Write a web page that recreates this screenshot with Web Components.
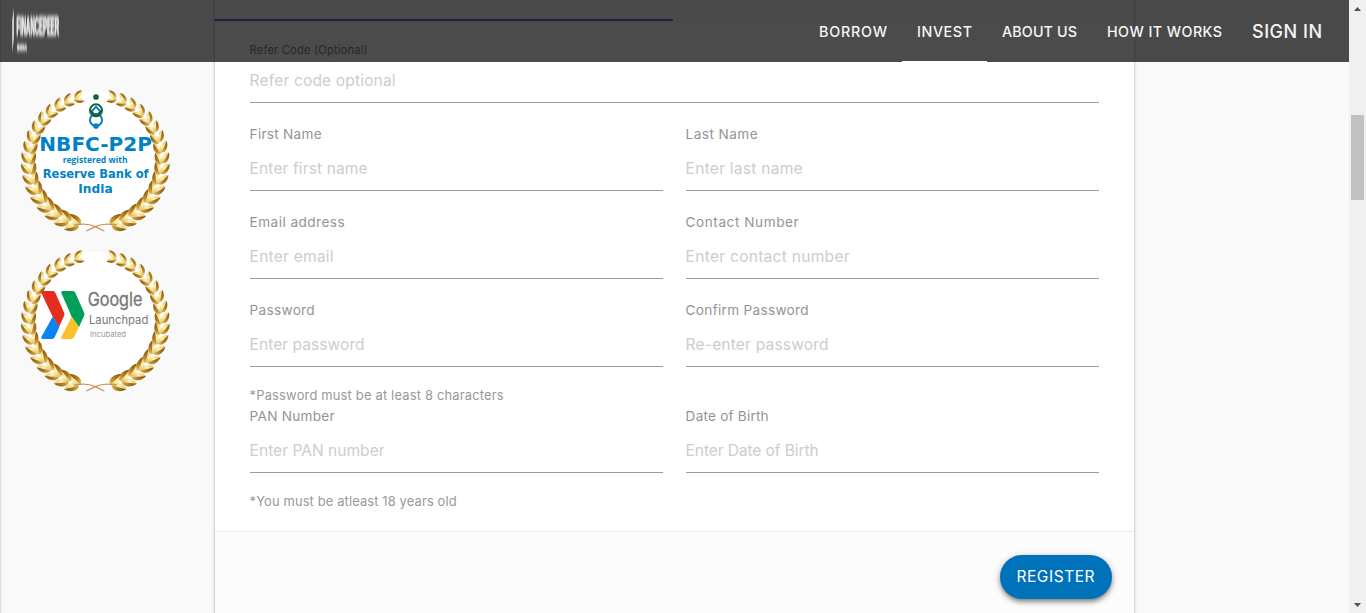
<!DOCTYPE html>
<html lang="en">
<head>
<meta charset="utf-8">
<title>Financepeer</title>
<style>
html,body{margin:0;height:100%;overflow:hidden;background:#f9f9f9;font-family:Inter,"Open Sans",sans-serif}
</style>
</head>
<body>
<fp-app></fp-app>
<script>
const define = (name, html, setup) => customElements.define(name, class extends HTMLElement {
  connectedCallback() {
    if (this.shadowRoot) return;
    const t = document.createElement('template');
    t.innerHTML = html;
    this.attachShadow({mode: 'open'}).append(t.content.cloneNode(true));
    if (setup) setup(this, this.shadowRoot);
  }
});

// Text that is tracked to fill a given width.
define('fp-text', `<style>:host{display:inline-block;white-space:nowrap;width:max-content}span{display:inline-block}</style><span><slot></slot></span>`,
  (el, root) => {
    const span = root.querySelector('span'), w = +el.getAttribute('w');
    const n = el.textContent.length;
    const natural = span.getBoundingClientRect().width;
    if (!w || !natural) return;
    span.style.letterSpacing = ((w - natural) / (n - 1)) + 'px';
    el.style.width = w + 'px';
  });

define('fp-field', `<style>
:host{display:block;box-sizing:border-box;height:88px;padding-top:21px;border-bottom:1px solid #9b9b9b}
.label{height:20px;line-height:20px;font-size:13.6px;color:#949494}
.input{height:20px;line-height:21px;margin-top:14px;font-size:15.6px;color:#cdcdcd}
.label,.input{margin-left:-.4px}
:host([wide]){grid-column:1/-1;height:81px;padding-top:18px}
:host([wide]) .label{font-size:11.2px;color:#8a8a8a}
:host([wide]) .input{margin-top:10px}
</style><div class="label"></div><div class="input"></div>`, (el, root) => {
  for (const k of ['label', 'input']) {
    const [text, w] = el.getAttribute(k).split('|');
    const t = document.createElement('fp-text');
    t.textContent = text; t.setAttribute('w', w);
    root.querySelector('.' + k).append(t);
  }
});

define('fp-hint', `<style>:host{display:block;grid-column:1/-1;height:20px;line-height:20px;margin:19px 0 -21px -.4px;font-size:12.9px;color:#999}</style><slot></slot>`);

define('fp-button', `<style>
:host{display:block}
button{display:flex;align-items:center;justify-content:center;width:112px;height:44px;padding:0 1px 1px 0;border:0;border-radius:22px;background:#0072b9;color:#fff;font:400 15.5px Inter,sans-serif;box-shadow:0 3px 5px -1px #0006,0 2px 7px #0004}
</style><button><slot></slot></button>`);

define('fp-nav-item', `<style>
:host{display:flex;align-items:center;box-sizing:border-box;height:62px;padding:2px 15px 0;color:#f5f5f5;font-size:14.3px;font-weight:500;border-bottom:1px solid transparent}
:host([active]){border-bottom-color:#fff}
:host([large]){font-size:18px}
</style><slot></slot>`);

define('fp-logo', `<style>:host{display:block}svg{display:block}text{font-family:"Liberation Sans",sans-serif;font-weight:700;fill:#f4f4f4}</style>
<svg width="64" height="60" viewBox="0 0 64 60">
<defs><filter id="soft" x="-20%" y="-20%" width="140%" height="140%"><feGaussianBlur stdDeviation=".6 2.2"/></filter></defs>
<g filter="url(#soft)"><path d="M13.9 8v30l-1.7 14v-32z" fill="#ddd"/>
<g transform="translate(16.5 35) scale(.52 2.2)"><text font-size="12" textLength="82" lengthAdjust="spacingAndGlyphs" stroke="#f4f4f4" stroke-width=".7">FINANCEPEER</text></g>
<g transform="translate(17 49.5) scale(.5 1.2)"><text font-size="6" textLength="20" lengthAdjust="spacingAndGlyphs" stroke="#f4f4f4" stroke-width=".7">INDIA</text></g></g></svg>`);

define('fp-header', `<style>
:host{position:absolute;top:0;left:0;width:1349px;height:62px;display:flex;justify-content:space-between;background:rgba(0,0,0,.705);z-index:2}
nav{display:flex;padding-right:12px}
</style><fp-logo></fp-logo><nav>
<fp-nav-item><fp-text w="68">BORROW</fp-text></fp-nav-item>
<fp-nav-item active><fp-text w="55">INVEST</fp-text></fp-nav-item>
<fp-nav-item><fp-text w="75">ABOUT US</fp-text></fp-nav-item>
<fp-nav-item><fp-text w="115">HOW IT WORKS</fp-text></fp-nav-item>
<fp-nav-item large><fp-text w="70">SIGN IN</fp-text></fp-nav-item></nav>`);

// Round seal framed by two laurel branches; the artwork inside depends on kind.
const art = {
  rbi: `<g fill="none" stroke-width="6"><circle cx="258" cy="120" r="18" stroke="#0082c5"/><circle cx="258" cy="91" r="18" stroke="#155f3a"/>
<path d="M241 99L258 80L275 99" stroke="#0082c5"/><path d="M241 92L258 108L275 92" stroke="#155f3a"/></g>
<circle cx="258" cy="51" r="8.5" fill="#155f3a"/><circle cx="258" cy="138" r="8.5" fill="#0082c5"/>
<g fill="#0082c5" font-family="DejaVu Sans" font-weight="700">
<text x="88" y="212" font-size="59" textLength="338" lengthAdjust="spacingAndGlyphs">NBFC-P2P</text>
<text x="158" y="250" font-size="25" textLength="195" lengthAdjust="spacingAndGlyphs" font-family="Open Sans">registered with</text>
<text x="98" y="295" font-size="35" textLength="318" lengthAdjust="spacingAndGlyphs">Reserve Bank of</text>
<text x="205" y="339" font-size="35" textLength="103" lengthAdjust="spacingAndGlyphs">India</text></g>`,
  google: `<path d="M98 153h31q5 0 7 5l27 62q1 4-1 8l-15 33-19-31-34-71q-2-6 4-6z" fill="#e52d1d"/>
<path d="M128 230l20 31-14 31q-2 5-8 5H98q-6 0-4-6z" fill="#0a84f5"/>
<path d="M158 153h31q5 0 7 5l27 62q1 4-1 8l-15 33-22-31-31-71q-2-6 4-6z" fill="#00a05a"/>
<path d="M185 230l22 31-15 31q-2 5-8 5h-26q-6 0-4-6z" fill="#fbc02d"/>
<g fill="#77787b" font-family="Inter">
<text x="233" y="198" font-size="56" textLength="164" lengthAdjust="spacingAndGlyphs" stroke="#77787b">Google</text>
<text x="237" y="251" font-size="36" textLength="178" lengthAdjust="spacingAndGlyphs">Launchpad</text>
<text x="240" y="290" font-size="24" textLength="108" lengthAdjust="spacingAndGlyphs" fill="#999">Incubated</text></g>`
};
define('fp-seal', `<style>:host{display:block;width:170px;height:160px}svg{display:block}</style>
<svg width="170" height="160" viewBox="0 0 510 480">
<defs><linearGradient id="gold" x1="0" y1="0" x2="1" y2="0"><stop offset="0" stop-color="#dcb958"/><stop offset=".5" stop-color="#fff2b4"/><stop offset="1" stop-color="#dcb95c"/></linearGradient>
<linearGradient id="bronze" x1="0" y1="0" x2="1" y2="0"><stop offset="0" stop-color="#e0ba58"/><stop offset=".45" stop-color="#b07c20"/><stop offset="1" stop-color="#84530f"/></linearGradient></defs>
<ellipse cx="256" cy="241" rx="205" ry="206" fill="#fff"/><g id="wreath"></g><g id="art"></g></svg>`, (el, root) => {
  const N = 17;
  let branch = '';
  for (let i = 0; i < N; i++) {
    const k = i / (N - 1);
    const a = (194 + 148 * k) * Math.PI / 180;
    const rx = 200, ry = 198;
    const x = 256 + rx * Math.sin(a), y = 243 - ry * Math.cos(a);
    const L = 47 - 15 * k, W = 12 - 4 * k;
    const dir = a * 180 / Math.PI;
    // Each leaf has a lit half and a shaded half along its midrib.
    const half = s => `M0 0C${L*.12} ${s*W*1.4} ${L*.7} ${s*W*1.3} ${L} 0Q${L*.5} ${-s*W*.15} 0 0z`;
    branch += `<g transform="translate(${x.toFixed(1)} ${y.toFixed(1)}) rotate(${dir.toFixed(1)})">
      <g transform="rotate(-30)"><path d="${half(-1)}" fill="url(#bronze)"/><path d="${half(1)}" fill="url(#gold)"/></g>
      <g transform="translate(-4 3) rotate(27)"><path d="${half(-1)}" fill="url(#gold)"/><path d="${half(1)}" fill="url(#bronze)"/></g></g>`;
  }
  branch += `<path d="M192 435Q232 428 256 440Q270 447 283 453" fill="none" stroke="#c79a5c" stroke-width="4"/>`;
  root.getElementById('wreath').innerHTML = `<g>${branch}</g><g transform="translate(512 0) scale(-1 1)">${branch}</g>`;
  root.getElementById('art').innerHTML = art[el.getAttribute('kind')];
});

define('fp-card', `<style>
:host{display:block;width:919px;background:#fff;box-shadow:0 0 3px #0005;height:640px}
.tab{height:22px;box-sizing:border-box;padding-top:19px;background:#fafafa;border-bottom:1px solid #f4f4f4}
.tab i{display:block;width:459px;height:2px;margin-left:-1px;background:#5878ea}
.form{display:grid;grid-template-columns:413px 413px;align-content:start;column-gap:23px;padding:0 35px;height:509px}
.foot{display:flex;justify-content:flex-end;padding:23px 22px 30px;background:#fcfcfc;border-top:1px solid #eee;height:60px}
</style><div class="tab"><i></i></div><div class="form"><slot></slot></div><div class="foot"><slot name="action"></slot></div>`);

define('fp-scrollbar', `<style>
:host{display:flex;flex-direction:column;align-items:center;width:17px;height:613px;background:#f0f0f0}
i{display:block;width:13px;height:85px;margin:98px 0 auto;background:#c1c1c1}svg{display:block}
</style><svg width="17" height="17"><path d="M5 11h7L8.5 7z" fill="#505050"/></svg><i></i><svg width="17" height="17"><path d="M5 7h7L8.5 11z" fill="#505050"/></svg>`);

define('fp-app', `<style>
:host{display:grid;grid-template-columns:215px 919px 1fr 17px;height:613px;width:1366px;overflow:hidden;position:relative}
aside{padding:80px 0 0 10px;box-shadow:inset 2px 0 2px -1px #0002}
</style><fp-header></fp-header>
<aside><fp-seal kind="rbi"></fp-seal><fp-seal kind="google"></fp-seal></aside>
<fp-card>
<fp-field wide label="Refer Code (Optional)|118" input="Refer code optional|146"></fp-field>
<fp-field label="First Name|72" input="Enter first name|118"></fp-field>
<fp-field label="Last Name|72" input="Enter last name|117"></fp-field>
<fp-field label="Email address|95" input="Enter email|84"></fp-field>
<fp-field label="Contact Number|113" input="Enter contact number|164"></fp-field>
<fp-field label="Password|65" input="Enter password|115"></fp-field>
<fp-field label="Confirm Password|123" input="Re-enter password|143"></fp-field>
<fp-hint><fp-text w="254">*Password must be at least 8 characters</fp-text></fp-hint>
<fp-field label="PAN Number|85" input="Enter PAN number|135"></fp-field>
<fp-field label="Date of Birth|83" input="Enter Date of Birth|133"></fp-field>
<fp-hint><fp-text w="207">*You must be atleast 18 years old</fp-text></fp-hint>
<fp-button slot="action"><fp-text w="78">REGISTER</fp-text></fp-button>
</fp-card><span></span><fp-scrollbar></fp-scrollbar>`);
</script>
</body>
</html>
